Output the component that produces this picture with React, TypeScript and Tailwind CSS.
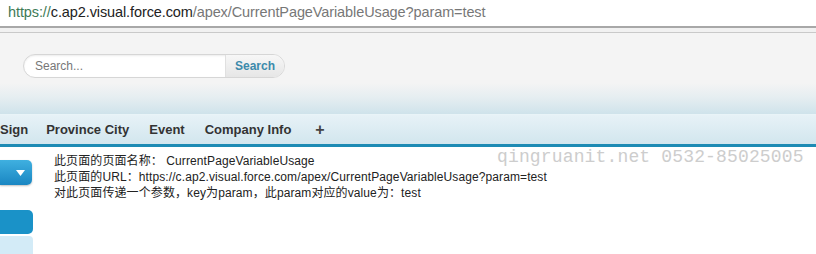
import React from "react";

export default function App() {
  const sans = { fontFamily: '"Liberation Sans", Arial, "Noto Sans CJK SC", sans-serif' };
  return (
    <div className="w-[816px] h-[254px] overflow-hidden bg-white relative" style={sans}>
      {/* URL bar */}
      <div className="h-[28px] bg-white border-b-2 border-[#a8a8a8] flex items-center pl-[8px] text-[14.5px] tracking-[-0.1px]">
        <span className="text-[#3d7a56]">https://</span>
        <span className="text-[#222]">c.ap2.visual.force.com</span>
        <span className="text-[#777]">/apex/CurrentPageVariableUsage?param=test</span>
      </div>
      <div className="h-[5px] bg-[#f1f1f1] border-b border-[#c9c9c9]" />
      {/* header body */}
      <div className="h-[81px] bg-[linear-gradient(to_bottom,#f4f4f4_0px,#f4f4f4_50px,#e6eef1_64px,#cfe3eb_81px)] pt-[21px] pl-[23px]">
        <div className="flex items-center h-[24px] w-[262px] rounded-full border border-[#d6d6d6] bg-white overflow-hidden shadow-[inset_0_1px_2px_rgba(0,0,0,0.08)]">
          <div className="flex-1 pl-[11px] text-[12px] text-[#777]">Search...</div>
          <div className="w-[59px] h-full flex items-center justify-center bg-[linear-gradient(to_bottom,#f7f7f7,#e6e6e6)] border-l border-[#e0e0e0] text-[12px] font-bold text-[#3c8aab]">
            Search
          </div>
        </div>
      </div>
      {/* nav bar */}
      <div className="h-[33px] bg-[linear-gradient(to_bottom,#e7f2f7,#d2e6ee)] border-t border-[#e9f4f8] border-b-[3px] border-b-[#1d8bb4] flex items-center pt-[1px] text-[13px] font-bold text-[#333]">
        <span className="ml-[0px]">Sign</span>
        <span className="ml-[18px]">Province City</span>
        <span className="ml-[20px]">Event</span>
        <span className="ml-[20px]">Company Info</span>
        <span className="ml-[24px] text-[16px] text-[#444]">+</span>
      </div>
      {/* body */}
      <div className="flex">
        <div className="w-[34px] flex flex-col pt-[13px]">
          <div className="h-[25px] w-[32px] rounded-r-[5px] bg-[linear-gradient(to_bottom,#3fb0e0,#1a86c2)] shadow-[0_1px_2px_rgba(0,0,0,0.25)] flex items-center justify-end pr-[7px]">
            <svg width="9" height="6" viewBox="0 0 9 6"><path d="M0 0 H9 L4.5 6 Z" fill="#fff" /></svg>
          </div>
          <div className="h-[24px] w-[33px] mt-[25px] rounded-r-[5px] bg-[#1a92c8]" />
          <div className="h-[20px] w-[33px] mt-[2px] rounded-tr-[4px] bg-[#d3ebf7]" />
        </div>
        <div className="ml-[20px] pt-[6px] text-[12px] leading-[16px] tracking-[0.1px] text-[#222]">
          <div>此页面的页面名称： CurrentPageVariableUsage</div>
          <div>此页面的URL：https://c.ap2.visual.force.com/apex/CurrentPageVariableUsage?param=test</div>
          <div>对此页面传递一个参数，key为param，此param对应的value为：test</div>
        </div>
      </div>
      {/* watermark */}
      <div
        className="absolute left-[497px] top-[146px] text-[18px] leading-[22px] tracking-[0.15px] text-[#cdcdcd] whitespace-nowrap"
        style={{ fontFamily: '"Liberation Mono", "Courier New", monospace' }}
      >
        qingruanit.net 0532-85025005
      </div>
    </div>
  );
}
